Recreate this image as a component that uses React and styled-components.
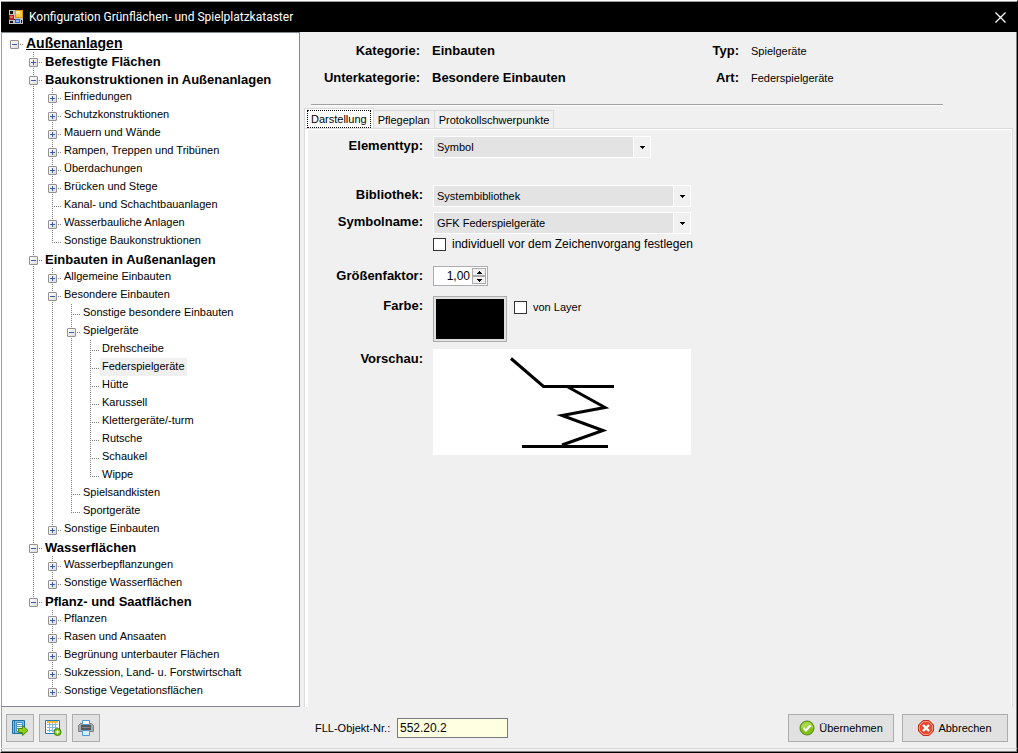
import { useState } from 'react';
import styled, { createGlobalStyle } from 'styled-components';

const TREE = {
  label: 'Außenanlagen',
  children: [
    { label: 'Befestigte Flächen', collapsed: true },
    {
      label: 'Baukonstruktionen in Außenanlagen',
      children: [
        { label: 'Einfriedungen', collapsed: true },
        { label: 'Schutzkonstruktionen', collapsed: true },
        { label: 'Mauern und Wände', collapsed: true },
        { label: 'Rampen, Treppen und Tribünen', collapsed: true },
        { label: 'Überdachungen', collapsed: true },
        { label: 'Brücken und Stege', collapsed: true },
        { label: 'Kanal- und Schachtbauanlagen' },
        { label: 'Wasserbauliche Anlagen', collapsed: true },
        { label: 'Sonstige Baukonstruktionen' },
      ],
    },
    {
      label: 'Einbauten in Außenanlagen',
      children: [
        { label: 'Allgemeine Einbauten', collapsed: true },
        {
          label: 'Besondere Einbauten',
          children: [
            { label: 'Sonstige besondere Einbauten' },
            {
              label: 'Spielgeräte',
              children: [
                { label: 'Drehscheibe' },
                { label: 'Federspielgeräte' },
                { label: 'Hütte' },
                { label: 'Karussell' },
                { label: 'Klettergeräte/-turm' },
                { label: 'Rutsche' },
                { label: 'Schaukel' },
                { label: 'Wippe' },
              ],
            },
            { label: 'Spielsandkisten' },
            { label: 'Sportgeräte' },
          ],
        },
        { label: 'Sonstige Einbauten', collapsed: true },
      ],
    },
    {
      label: 'Wasserflächen',
      children: [
        { label: 'Wasserbepflanzungen', collapsed: true },
        { label: 'Sonstige Wasserflächen', collapsed: true },
      ],
    },
    {
      label: 'Pflanz- und Saatflächen',
      children: [
        { label: 'Pflanzen', collapsed: true },
        { label: 'Rasen und Ansaaten', collapsed: true },
        { label: 'Begrünung unterbauter Flächen', collapsed: true },
        { label: 'Sukzession, Land- u. Forstwirtschaft', collapsed: true },
        { label: 'Sonstige Vegetationsflächen', collapsed: true },
      ],
    },
  ],
};

const TABS = ['Darstellung', 'Pflegeplan', 'Protokollschwerpunkte'];

function TreeNode({ node, guides, isLast, selected, onSelect }) {
  const [isOpen, setIsOpen] = useState(!node.collapsed);
  const level = guides.length;
  const hasToggle = node.collapsed || !!node.children;
  const childGuides = [...guides, level > 0 && !isLast];

  return (
    <TreeItem>
      <TreeRow>
        {guides.map((line, i) => (
          <Guide key={i} $line={line ? 'full' : 'none'} />
        ))}
        <Guide $line={level === 0 ? 'none' : isLast ? 'half' : 'full'} $branch>
          {hasToggle && (
            <Toggle
              type="button"
              aria-label={node.label}
              aria-expanded={isOpen}
              onClick={() => setIsOpen((prev) => !prev)}
            >
              <svg width="7" height="7" viewBox="0 0 7 7" stroke="#3b5aa8">
                <path d={isOpen ? 'M1 3.5h5' : 'M1 3.5h5M3.5 1v5'} />
              </svg>
            </Toggle>
          )}
        </Guide>
        <NodeLabel
          type="button"
          $level={level}
          $selected={selected === node.label}
          onClick={() => onSelect(node.label)}
        >
          {node.label}
        </NodeLabel>
      </TreeRow>
      {isOpen && node.children && (
        <TreeList>
          {node.children.map((child, i) => (
            <TreeNode
              key={child.label}
              node={child}
              guides={childGuides}
              isLast={i === node.children.length - 1}
              selected={selected}
              onSelect={onSelect}
            />
          ))}
        </TreeList>
      )}
    </TreeItem>
  );
}

function Arrow({ up }) {
  return (
    <svg width="5" height="3" viewBox="0 0 5 3" shapeRendering="crispEdges" aria-hidden="true">
      <path d={up ? 'M2 0h1v1H2zM1 1h3v1H1zM0 2h5v1H0z' : 'M0 0h5v1H0zM1 1h3v1H1zM2 2h1v1H2z'} />
    </svg>
  );
}

function ComboBox({ id, options, width }) {
  return (
    <Combo $width={width}>
      <ComboSelect id={id}>
        {options.map((option) => (
          <option key={option}>{option}</option>
        ))}
      </ComboSelect>
      <ComboArrow>
        <Arrow />
      </ComboArrow>
    </Combo>
  );
}

function AppIcon() {
  return (
    <svg width="14" height="14" viewBox="0 0 14 14" shapeRendering="crispEdges" aria-hidden="true">
      <path fill="#c4c4c4" d="M0 0h14v14H0z" />
      <path fill="#111" d="M1 1h3v3H1zM1 11h3v2H1zM12 10h1v3h-1zM5 9h1v1H5z" />
      <path fill="#b3241a" d="M0 5h5v5H0z" />
      <path fill="#ef6a4c" d="M1 6h3v2H1z" />
      <path fill="#d99a08" d="M6 0h8v8H6z" />
      <path fill="#fcc93c" d="M7 1h6v6H7z" />
      <path fill="#ffe795" d="M7 1h4v3H7z" />
      <path fill="#2f62c9" d="M6 9h5v4H6z" />
      <path fill="#86b4f5" d="M7 10h3v2H7z" />
    </svg>
  );
}

function ExportIcon() {
  return (
    <svg width="17" height="16" viewBox="0 0 17 16" aria-hidden="true">
      <path fill="#7dbce0" stroke="#1c6ea4" d="M.5.5h12v13H.5z" />
      <path stroke="#2f80b4" d="M2.5 1v12" />
      <path fill="#e8f5fc" stroke="#4a94c4" d="M4.5 2.5h6v9h-6z" />
      <path stroke="#5a9dc8" d="M5 4.5h5M5 6.5h5M5 8.5h2" />
      <path fill="#8fd014" stroke="#4c8a0c" d="M6.5 8.5h4v-3l5.5 5-5.5 5v-3h-4z" />
    </svg>
  );
}

function TableAddIcon() {
  return (
    <svg width="17" height="16" viewBox="0 0 17 16" aria-hidden="true">
      <path fill="#fff" stroke="#1c7cb4" d="M.5.5h14v13H.5z" />
      <path fill="#f6b73c" d="M2 1h11v2H2z" />
      <path stroke="#7db7dc" d="M2 4.5h11M2 7.5h11M2 10.5h11M4.5 3v9M7.5 3v9M10.5 3v9" />
      <circle cx="12.5" cy="12" r="3.5" fill="#7cc41c" stroke="#3f7f0a" />
      <path stroke="#fff" d="M10.5 12h4M12.5 10v4" />
    </svg>
  );
}

function PrintIcon() {
  return (
    <svg width="16" height="16" viewBox="0 0 16 16" aria-hidden="true">
      <path fill="#a9a9a9" stroke="#808080" d="M.5 5.5l2-2h11l2 2v6H.5z" />
      <path fill="#fff" stroke="#4c9cd0" d="M4.5.5h7v4h-7z" />
      <path fill="#55595d" d="M3 5h10v5H3z" />
      <path stroke="#85898d" d="M4 7.5h8" />
      <path fill="#d6ecfa" stroke="#4c9cd0" d="M4.5 10.5h7v5h-7z" />
    </svg>
  );
}

function OkIcon() {
  return (
    <svg width="16" height="16" viewBox="0 0 16 16" aria-hidden="true">
      <circle cx="8" cy="8" r="7" fill="#86bf1c" stroke="#4f8a12" />
      <path fill="#a9d84c" d="M2 8a6 6 0 0 1 12 0c-3-2-8 1-12 0z" />
      <path fill="none" stroke="#fff" strokeWidth="2" d="M4.5 8l2.5 2.5 4.5-5" />
    </svg>
  );
}

function CancelIcon() {
  return (
    <svg width="16" height="16" viewBox="0 0 16 16" aria-hidden="true">
      <path fill="#e8492f" stroke="#c22a1a" d="M5 .5h6L15.5 5v6L11 15.5H5L.5 11V5z" />
      <path fill="none" stroke="#f9a08c" d="M5.5 1.5h5l4 4v5l-4 4h-5l-4-4v-5z" />
      <path stroke="#fff" strokeWidth="2.4" d="M5 5l6 6M11 5l-6 6" />
    </svg>
  );
}

function SpringPreview() {
  return (
    <svg width="258" height="106" viewBox="0 0 258 106" role="img" aria-label="GFK Federspielgeräte">
      <path
        fill="none"
        stroke="#000"
        strokeWidth="3"
        d="M78 9.5L110.5 37.5H181M135 38L172 58.5L129 66.5L170 81.5L129 96M89 97.5H175"
      />
    </svg>
  );
}

export default function App() {
  const [selected, setSelected] = useState('Federspielgeräte');
  const [tab, setTab] = useState(TABS[0]);

  return (
    <>
      <GlobalStyle />
      <Window>
        <TitleBar>
          <AppIcon />
          <Title>Konfiguration Grünflächen- und Spielplatzkataster</Title>
          <CloseButton type="button" aria-label="Schließen">
            <svg width="11" height="11" viewBox="0 0 11 11" stroke="#fff" strokeWidth="1.3">
              <path d="M.5.5l10 10M10.5.5l-10 10" />
            </svg>
          </CloseButton>
        </TitleBar>

        <Body>
          <TreePane>
            <TreeList>
              <TreeNode node={TREE} guides={[]} isLast selected={selected} onSelect={setSelected} />
            </TreeList>
          </TreePane>

          <Main>
            <Summary>
              <SummaryLabel>Kategorie:</SummaryLabel>
              <SummaryValue $strong>Einbauten</SummaryValue>
              <SummaryLabel>Typ:</SummaryLabel>
              <SummaryValue>Spielgeräte</SummaryValue>
              <SummaryLabel>Unterkategorie:</SummaryLabel>
              <SummaryValue $strong>Besondere Einbauten</SummaryValue>
              <SummaryLabel>Art:</SummaryLabel>
              <SummaryValue>Federspielgeräte</SummaryValue>
            </Summary>
            <Divider />

            <TabBar role="tablist">
              {TABS.map((name) => (
                <Tab
                  key={name}
                  type="button"
                  role="tab"
                  aria-selected={name === tab}
                  $active={name === tab}
                  onClick={() => setTab(name)}
                >
                  <TabText $active={name === tab}>{name}</TabText>
                </Tab>
              ))}
            </TabBar>
            <TabPanel role="tabpanel">
              <FormRow $space={27}>
                <FieldLabel htmlFor="elementtyp">Elementtyp:</FieldLabel>
                <ComboBox id="elementtyp" options={['Symbol']} width={218} />
              </FormRow>
              <FormRow $space={5}>
                <FieldLabel htmlFor="bibliothek">Bibliothek:</FieldLabel>
                <ComboBox id="bibliothek" options={['Systembibliothek']} width={258} />
              </FormRow>
              <FormRow $space={14}>
                <FieldLabel htmlFor="symbolname">Symbolname:</FieldLabel>
                <FieldStack>
                  <ComboBox id="symbolname" options={['GFK Federspielgeräte']} width={258} />
                  <CheckLabel $large>
                    <CheckBox type="checkbox" />
                    individuell vor dem Zeichenvorgang festlegen
                  </CheckLabel>
                </FieldStack>
              </FormRow>
              <FormRow $space={10}>
                <FieldLabel htmlFor="faktor">Größenfaktor:</FieldLabel>
                <Spinner>
                  <SpinnerInput id="faktor" type="text" defaultValue="1,00" />
                  <SpinnerButtons>
                    <SpinnerButton type="button" aria-label="Größer">
                      <Arrow up />
                    </SpinnerButton>
                    <SpinnerButton type="button" aria-label="Kleiner">
                      <Arrow />
                    </SpinnerButton>
                  </SpinnerButtons>
                </Spinner>
              </FormRow>
              <FormRow $space={7}>
                <FieldLabel htmlFor="farbe">Farbe:</FieldLabel>
                <ColorRow>
                  <ColorButton id="farbe" type="button">
                    <ColorSwatch />
                  </ColorButton>
                  <CheckLabel>
                    <CheckBox type="checkbox" />
                    von Layer
                  </CheckLabel>
                </ColorRow>
              </FormRow>
              <FormRow $space={0}>
                <FieldLabel as="span">Vorschau:</FieldLabel>
                <Preview>
                  <SpringPreview />
                </Preview>
              </FormRow>
            </TabPanel>
          </Main>
        </Body>

        <Footer>
          <ToolButtons>
            <ToolButton type="button" aria-label="Exportieren">
              <ExportIcon />
            </ToolButton>
            <ToolButton type="button" aria-label="Tabelle hinzufügen">
              <TableAddIcon />
            </ToolButton>
            <ToolButton type="button" aria-label="Drucken">
              <PrintIcon />
            </ToolButton>
          </ToolButtons>
          <ObjectLabel htmlFor="objektnr">FLL-Objekt-Nr.:</ObjectLabel>
          <ObjectInput id="objektnr" type="text" defaultValue="552.20.2" />
          <Actions>
            <ActionButton type="button">
              <OkIcon />
              Übernehmen
            </ActionButton>
            <ActionButton type="button">
              <CancelIcon />
              Abbrechen
            </ActionButton>
          </Actions>
        </Footer>
      </Window>
    </>
  );
}

const GlobalStyle = createGlobalStyle`
  *, *::before, *::after {
    box-sizing: border-box;
  }

  body {
    margin: 0;
    background: #fff;
    color: #000;
    font: 11px/16px 'Liberation Sans', Arial, sans-serif;
  }

  button, input, select {
    margin: 0;
    padding: 0;
    font: inherit;
    color: inherit;
    border-radius: 0;
  }

  svg {
    display: block;
    flex-shrink: 0;
  }
`;

const Window = styled.div`
  display: flex;
  flex-direction: column;
  min-height: 100vh;
  border: 1px solid #000;
  border-top-color: #fff;
  border-left-color: #fff;
  background: #f0f0f0;
  box-shadow: inset -1px -1px #808080, inset 1px 0 #a0a0a0;
`;

const TitleBar = styled.header`
  display: flex;
  align-items: center;
  height: 31px;
  padding: 0 11px 0 8px;
  border-top: 1px solid #a0a0a0;
  background: #000;
  color: #fff;
`;

const Title = styled.h1`
  flex: 1;
  margin: 0 0 0 6px;
  font: 400 12px/16px Roboto, 'Noto Sans', sans-serif;
`;

const CloseButton = styled.button`
  border: 0;
  background: none;
`;

const Body = styled.div`
  display: flex;
  flex: 1;
`;

const TreePane = styled.nav`
  flex: 0 0 299px;
  padding: 1px 3px 5px;
  border: 1px solid #828790;
  border-left-color: #a0a0a0;
  background: #fff;
`;

const TreeList = styled.ul`
  margin: 0;
  padding: 0;
  list-style: none;
`;

const TreeItem = styled.li`
  margin: 0;
`;

const TreeRow = styled.div`
  display: flex;
  height: 18px;
`;

const DOTS = '#808080 0 1px, transparent 1px 2px';

const Guide = styled.span`
  flex: 0 0 19px;
  padding: 6px 0 0 5px;
  background-repeat: no-repeat;
  background-image: repeating-linear-gradient(to bottom, ${DOTS}),
    repeating-linear-gradient(to right, ${DOTS});
  background-position: 9px 0, 9px 10px;
  background-size: ${({ $line, $branch }) => {
    const height = { full: 18, half: 11, none: 0 }[$line];
    return `1px ${height}px, ${$branch ? '9px 1px' : '0 0'}`;
  }};
`;

const Toggle = styled.button`
  display: block;
  width: 9px;
  height: 9px;
  border: 1px solid #919191;
  border-radius: 1px;
  background: linear-gradient(135deg, #fff, #dcdcdc);
`;

const NodeLabel = styled.button`
  display: block;
  height: 18px;
  padding: 0 2px 2px;
  border: 0;
  background: ${({ $selected }) => ($selected ? '#f0f0f0' : 'none')};
  line-height: 16px;
  white-space: nowrap;

  ${({ $level }) =>
    $level < 2 &&
    `
      padding-top: 1px;
      padding-bottom: 0;
      font-size: 13px;
      font-weight: 700;
      line-height: 18px;
    `}

  ${({ $level }) =>
    $level === 0 &&
    `
      padding-top: 0;
      font-size: 14px;
      text-decoration: underline;
    `}
`;

const Main = styled.main`
  display: flex;
  flex: 1;
  flex-direction: column;
  min-width: 0;
  padding: 0 4px;
`;

const Summary = styled.dl`
  display: grid;
  grid-template-columns: 116px 249px 46px 1fr;
  gap: 11px 12px;
  margin: 0;
  padding: 11px 0 18px;
`;

const SummaryLabel = styled.dt`
  font-size: 13px;
  font-weight: 700;
  text-align: right;
`;

const SummaryValue = styled.dd`
  margin: 0;
  ${({ $strong }) => $strong && `font-size: 13px; font-weight: 700;`}
`;

const Divider = styled.hr`
  align-self: stretch;
  height: 2px;
  margin: 0 70px 0 7px;
  border: 0;
  border-top: 1px solid #a0a0a0;
  border-bottom: 1px solid #fff;
`;

const TabBar = styled.div`
  display: flex;
  align-items: flex-end;
  height: 22px;
`;

const Tab = styled.button`
  height: 18px;
  margin-left: -1px;
  padding: 0;
  border: 1px solid #d9d9d9;
  border-bottom: 0;
  background: #f0f0f0;

  &:first-child {
    margin-left: 0;
  }

  ${({ $active }) => $active && `height: 20px; padding: 0 2px; background: #fff;`}
`;

const TabText = styled.span`
  display: block;
  padding: 0 3px;
  border: 1px ${({ $active }) => ($active ? 'dotted #000' : 'solid transparent')};
`;

const TabPanel = styled.section`
  flex: 1;
  padding: 7px 8px;
  border: 1px solid #dcdcdc;
  border-bottom: 0;
  box-shadow: inset 3px 1px #fff, inset -1px 0 #fff;
`;

const FormRow = styled.div`
  display: grid;
  grid-template-columns: 110px 1fr;
  column-gap: 10px;
  align-items: start;
  margin-bottom: ${({ $space }) => $space}px;
`;

const FieldLabel = styled.label`
  padding-top: 2px;
  font-size: 13px;
  font-weight: 700;
  text-align: right;
`;

const FieldStack = styled.div`
  display: grid;
  gap: 2px;
`;

const Combo = styled.div`
  display: grid;
  grid-template-columns: 1fr 17px;
  width: ${({ $width }) => $width}px;
  height: 22px;
  border: 1px solid #fff;
`;

const ComboSelect = styled.select`
  grid-area: 1 / 1 / 2 / 3;
  padding-left: 3px;
  border: 0;
  outline: 0;
  background: #e3e3e3;
  appearance: none;
`;

const ComboArrow = styled.span`
  display: grid;
  grid-area: 1 / 2;
  place-items: center;
  border-left: 1px solid #fff;
  background: #f0f0f0;
  pointer-events: none;
`;

const CheckLabel = styled.label`
  display: flex;
  align-items: center;
  gap: 6px;
  font-size: ${({ $large }) => ($large ? 12 : 11)}px;
`;

const CheckBox = styled.input`
  width: 13px;
  height: 13px;
  border: 1px solid #333;
  background: #fff;
  appearance: none;

  &:checked {
    box-shadow: inset 0 0 0 2px #fff;
    background: #333;
  }
`;

const Spinner = styled.div`
  display: flex;
  width: 55px;
  height: 20px;
  padding: 1px;
  border: 1px solid #abadb3;
  background: #fff;
`;

const SpinnerInput = styled.input`
  flex: 1;
  min-width: 0;
  padding-right: 2px;
  border: 0;
  outline: 0;
  background: none;
  font-size: 12px;
  text-align: right;
`;

const SpinnerButtons = styled.div`
  display: grid;
  flex: 0 0 14px;
  grid-template-rows: 1fr 1fr;
`;

const SpinnerButton = styled.button`
  display: grid;
  place-items: center;
  border: 1px solid #acacac;
  background: #f0f0f0;
`;

const ColorRow = styled.div`
  display: flex;
  align-items: flex-start;
  gap: 7px;

  ${CheckLabel} {
    padding-top: 3px;
  }
`;

const ColorButton = styled.button`
  width: 74px;
  height: 46px;
  padding: 2px;
  border: 1px solid #adadad;
  background: #e1e1e1;
`;

const ColorSwatch = styled.span`
  display: block;
  height: 100%;
  background: #000;
`;

const Preview = styled.div`
  width: 258px;
  background: #fff;
`;

const Footer = styled.footer`
  display: flex;
  align-items: center;
  height: 42px;
  margin-bottom: 3px;
  padding: 0 9px 0 5px;
  border-bottom: 1px solid #d9d9d9;
`;

const ToolButtons = styled.div`
  display: flex;
  flex: 0 0 309px;
  gap: 5px;
`;

const ToolButton = styled.button`
  display: grid;
  place-items: center;
  width: 28px;
  height: 28px;
  border: 1px solid #adadad;
  background: #e1e1e1;
`;

const ObjectLabel = styled.label`
  flex: 0 0 82px;
  white-space: nowrap;
`;

const ObjectInput = styled.input`
  width: 111px;
  height: 20px;
  padding: 0 2px;
  border: 1px solid #7a7a7a;
  background: #ffffe1;
  font-size: 12px;
`;

const Actions = styled.div`
  display: flex;
  gap: 8px;
  margin-left: auto;
`;

const ActionButton = styled.button`
  display: flex;
  align-items: center;
  justify-content: center;
  gap: 4px;
  width: 106px;
  height: 28px;
  border: 1px solid #adadad;
  background: #e1e1e1;
`;
